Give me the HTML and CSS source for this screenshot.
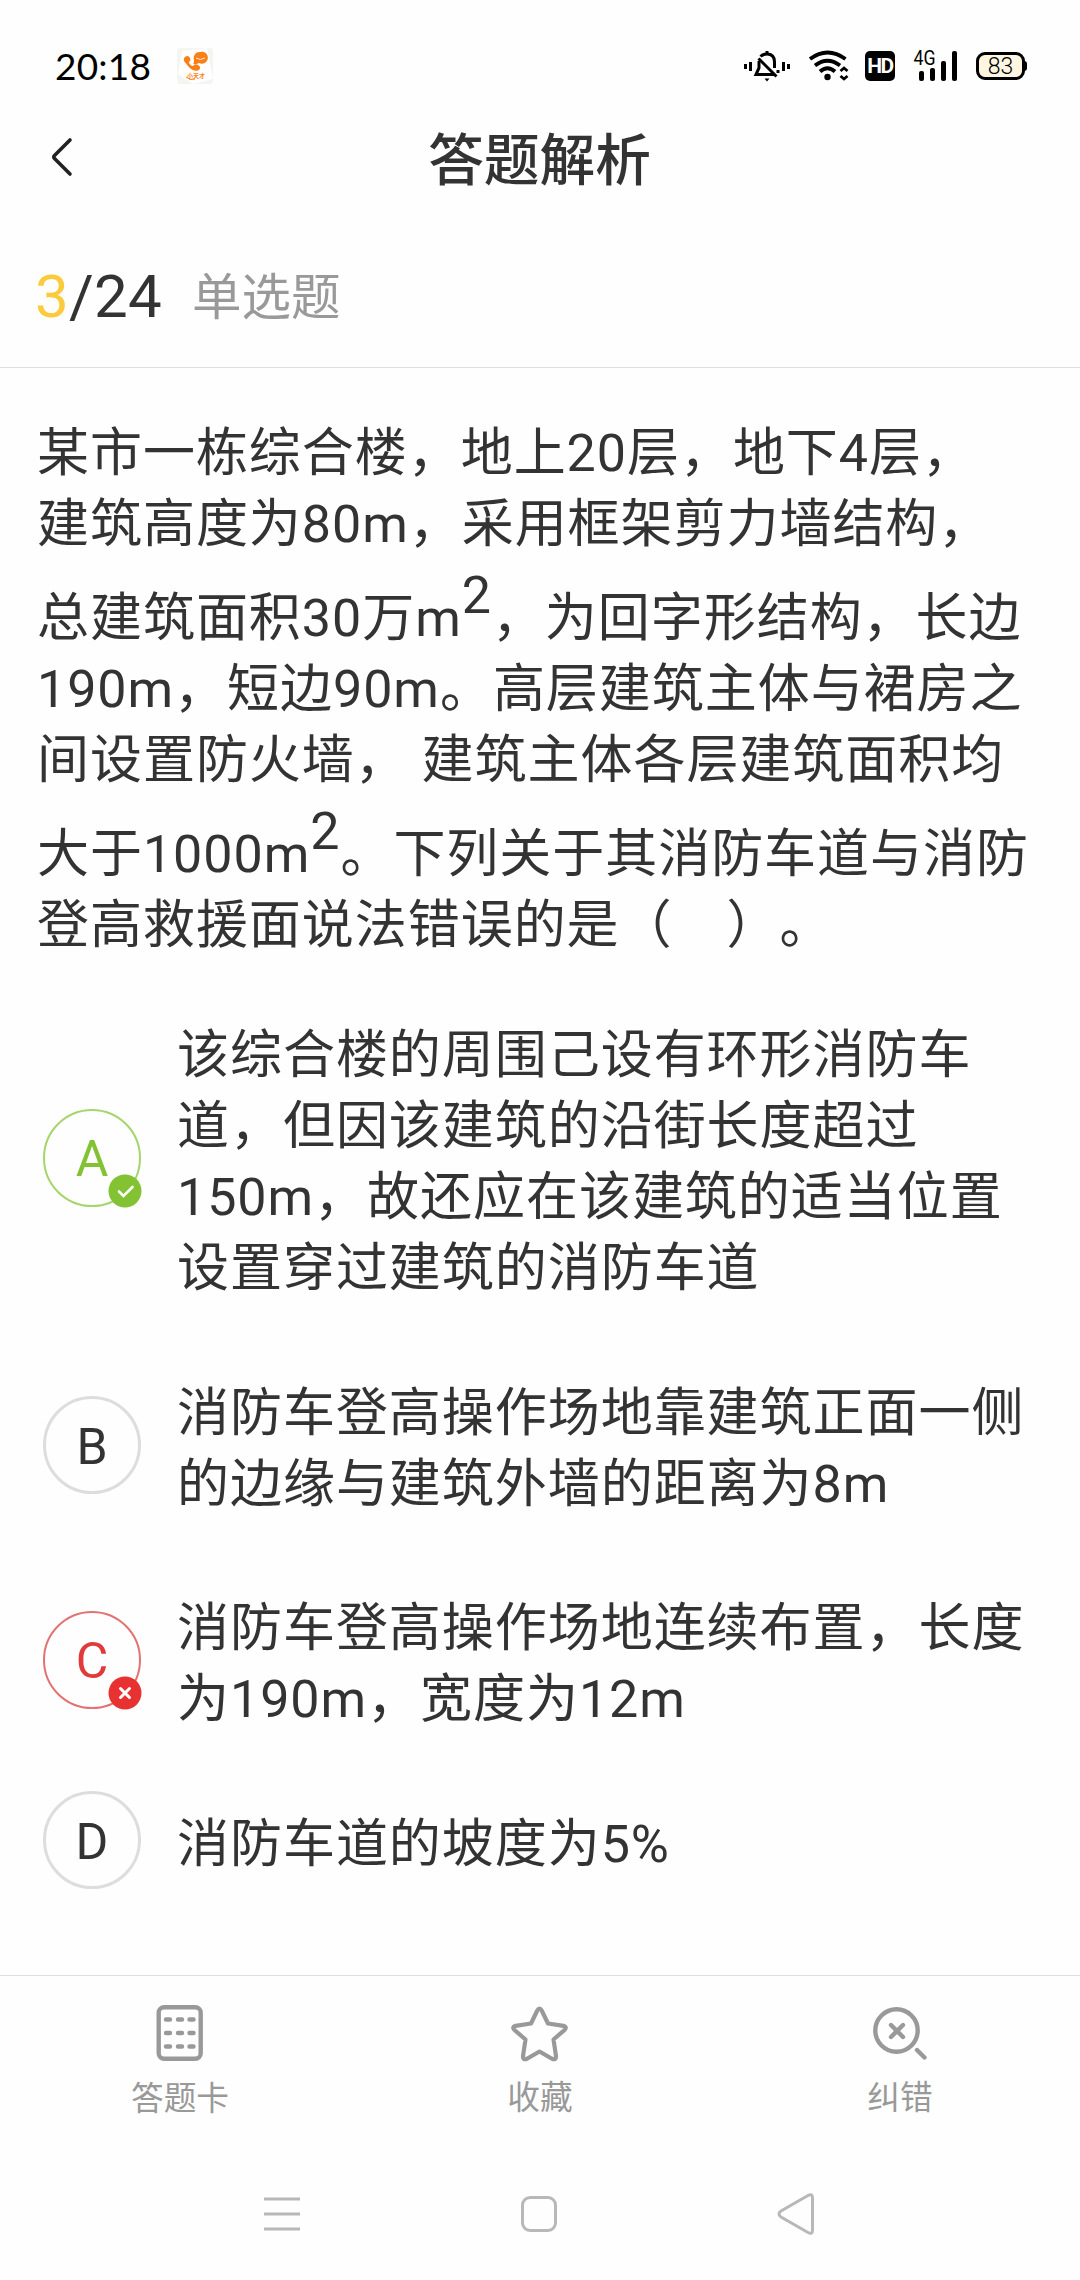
FILE: index.html
```html
<!DOCTYPE html>
<html lang="zh-CN">
  <head>
    <meta charset="UTF-8" />
    <meta name="viewport" content="width=device-width, initial-scale=1.0" />
    <title>答题解析</title>
    <link rel="stylesheet" href="styles.css">
  </head>
  <body>
    <div class="status-bar">
      <div class="time">20:18</div>
      <svg class="app-icon" width="36" height="36" viewBox="0 0 36 36">
        <rect width="36" height="36" rx="3" fill="#f4f5f0" />
        <path d="M5 3L30 0L36 31L16 36L1 26Z" fill="#fff" />
        <path d="M8 9c2-2 4-1 5 1s0 3-1 4c0 2 2 4 4 4c1-1 3-2 5-1s3 3 1 5c-3 2-8 0-11-4S5 12 8 9z" fill="#fa7f16" />
        <path d="M23 4a6 6 0 1 1-1 11c-2 1-4 2-6 1c1-1 1-2 1-4a6 6 0 0 1 6-8z" fill="#fa7f16" />
        <path d="M19 10q4 3 9 0" fill="none" stroke="#fff" stroke-width="0.8" />
        <path d="M9 29q4 4 9 2" fill="none" stroke="#fa7f16" />
        <text x="10" y="30" font-size="6" font-weight="700" fill="#fa7f16">小天才</text>
      </svg>
      <div class="status-icons">
        <!-- muted -->
        <svg width="46" height="32" viewBox="0 0 46 32" fill="none" stroke="#000" stroke-width="3">
          <path d="M1.5 14v5M6.500 12v9M39.500 12v9M44.500 14v5" />
          <path d="M16.500 6.500C18.500 4.500 20 4 23 4c5 0 7.500 3 7.500 8v6M15 11v7l-3 6.500h18" />
          <path d="M14.500 8.500l18 18M34 20v3M23 1v3" />
          <path d="M20.500 28.500h5l-2.500 3z" fill="#000" stroke="none" />
        </svg>
        <!-- wifi -->
        <svg class="wifi" width="40" height="32" viewBox="0 0 40 32" fill="none" stroke="#000" stroke-width="3.900">
          <path d="M1 9Q18.500-4 36.500 9M6 15.500Q18.500 6 31 15.500M11 21.500Q18.500 15 26 21.500" />
          <circle cx="18.500" cy="27" r="3.200" fill="#000" stroke="none" />
          <path d="M31.500 21l3.500-3 3.500 3M31.500 26l3.500 3 3.500-3" stroke-width="2.800" />
        </svg>
        <div class="hd">HD</div>
        <svg class="signal" width="46" height="32" viewBox="0 0 46 32">
          <text x="0.500" y="15" class="net" textLength="22" lengthAdjust="spacingAndGlyphs">4G</text>
          <rect x="6" y="21" width="5" height="10" rx="2" />
          <rect x="17" y="18" width="5" height="13" rx="2" />
          <rect x="28" y="11" width="5" height="20" rx="2" />
          <rect x="39" y="1" width="5" height="30" rx="2" />
        </svg>
        <div class="battery">83</div>
      </div>
    </div>

    <div class="header">
      <svg class="back" width="22" height="40" viewBox="0 0 22 40">
        <path d="M20 2L4.500 17.500Q3 19 4.500 20.500L20 36" fill="none" stroke="#222" stroke-width="3.600" stroke-linecap="round" />
      </svg>
      <h1>答题解析</h1>
    </div>

    <div class="progress">
      <div class="count"><span>3</span>/24</div>
      <div class="type">单选题</div>
    </div>

    <div class="content">
      <p class="question">
        某市一栋综合楼，地上20层，地下4层，<br />
        建筑高度为80m，采用框架剪力墙结构，<br />
        总建筑面积30万m<sup>2</sup>，为回字形结构，长边<br />
        190m，短边90m。高层建筑主体与裙房之<br />
        间设置防火墙， 建筑主体各层建筑面积均<br />
        大于1000m<sup>2</sup>。下列关于其消防车道与消防<br />
        登高救援面说法错误的是（<span class="blank"></span>）。
      </p>

      <div class="options">
        <div class="option correct">
          <div class="letter">A
            <svg class="badge" width="34" height="34" viewBox="0 0 34 34">
              <circle cx="17" cy="17" r="16.500" fill="#83c233" />
              <path d="M11 17.500l4.500 4.500 9-9" fill="none" stroke="#fff" stroke-width="2.600" stroke-linecap="round" />
            </svg>
          </div>
          <div class="text">该综合楼的周围己设有环形消防车<br />道，但因该建筑的沿街长度超过<br />150m，故还应在该建筑的适当位置<br />设置穿过建筑的消防车道</div>
        </div>
        <div class="option">
          <div class="letter">B</div>
          <div class="text">消防车登高操作场地靠建筑正面一侧<br />的边缘与建筑外墙的距离为8m</div>
        </div>
        <div class="option wrong">
          <div class="letter">C
            <svg class="badge" width="34" height="34" viewBox="0 0 34 34">
              <circle cx="17" cy="17" r="16.500" fill="#e83232" />
              <path d="M12.500 12.500l9 9M21.500 12.500l-9 9" fill="none" stroke="#fff" stroke-width="3" stroke-linecap="round" />
            </svg>
          </div>
          <div class="text">消防车登高操作场地连续布置，长度<br />为190m，宽度为12m</div>
        </div>
        <div class="option">
          <div class="letter">D</div>
          <div class="text">消防车道的坡度为5%</div>
        </div>
      </div>
    </div>

    <div class="toolbar">
      <div class="tool">
        <svg width="60" height="60" viewBox="0 0 60 60" fill="none" stroke="#999" stroke-width="4.400">
          <rect x="8.700" y="4.200" width="42" height="51.600" rx="5.500" />
          <path d="M16 16.500h4M28 16.500h4M39.500 16.500h4M16 30h4M28 30h4M39.500 30h4M16 43.500h4M28 43.500h4M39.500 43.500h4" stroke-linecap="round" />
        </svg>
        <span>答题卡</span>
      </div>
      <div class="tool">
        <svg width="60" height="60" viewBox="0 0 60 60" fill="none" stroke="#999" stroke-width="4.200" stroke-linejoin="round">
          <path d="M27.300 7.500Q29.500 3.500 31.700 7.500L38 20.500L53.500 22.800Q57.500 24 54.500 27L43.500 36.500L46 53Q46.200 57.500 42 55.800L29.500 48.500L17 55.800Q12.800 57.500 13 53L15.500 36.500L4.500 27Q1.500 24 5.500 22.800L21 20.500Z" />
        </svg>
        <span>收藏</span>
      </div>
      <div class="tool">
        <svg width="60" height="60" viewBox="0 0 60 60" fill="none" stroke="#999" stroke-width="4.400" stroke-linecap="round">
          <circle cx="26.500" cy="27.500" r="21.200" />
          <path d="M21 22l12 12M33 22l-12 12M47 47l7.500 7.500" />
        </svg>
        <span>纠错</span>
      </div>
    </div>

    <div class="nav-bar">
      <svg width="36" height="42" viewBox="0 0 36 42" stroke="#b8b8b8" stroke-width="3">
        <path d="M0 6h36M0 21h36M0 36h36" />
      </svg>
      <svg width="36" height="42" viewBox="0 0 36 42" fill="none" stroke="#b8b8b8" stroke-width="3">
        <rect x="1.500" y="4.500" width="33" height="33" rx="7.500" />
      </svg>
      <svg width="38" height="42" viewBox="0 0 38 42" fill="none" stroke="#b8b8b8" stroke-width="3">
        <path d="M31 2.500Q35.500 0 35.500 5V37Q35.500 42 31 39.500L4 24Q0 21 4 18Z" />
      </svg>
    </div>
  </body>
</html>
```
FILE: styles.css
```css
* {
  box-sizing: border-box;
}
body {
  display: flex;
  flex-direction: column;
  width: 1080px;
  height: 2280px;
  margin: 0;
  background-color: #fefefe;
  color: #333;
  font-family: Roboto, "Noto Sans CJK SC", sans-serif;
  text-spacing-trim: space-all;
}
svg {
  display: block;
  flex: none;
  overflow: visible;
}

.status-bar {
  display: flex;
  align-items: center;
  height: 96px;
  padding: 36px 55px 0 55px;
  color: #000;
}
.time {
  width: 122px;
  font: 37px/60px Lato, sans-serif;
  letter-spacing: 0.2px;
}
.status-icons {
  display: flex;
  align-items: center;
  margin-left: auto;
}
.status-icons svg {
  margin-right: 19px;
}
.status-icons .wifi {
  margin-right: 16px;
}
.status-icons .signal {
  margin-right: 17px;
}
.hd {
  width: 30px;
  height: 30px;
  margin-right: 18px;
  border-radius: 5px;
  background: #000;
  color: #fff;
  font-size: 21px;
  font-weight: 700;
  line-height: 31px;
  text-align: center;
  letter-spacing: -1.500px;
}
.net {
  font-size: 20px;
}
.battery {
  position: relative;
  width: 49px;
  height: 28px;
  border: 3px solid #000;
  border-radius: 9px;
  background: #fef6e0;
  font-size: 23px;
  font-weight: 300;
  line-height: 23px;
  text-align: center;
}
.battery::after {
  content: "";
  position: absolute;
  right: -5px;
  top: 6px;
  width: 3px;
  height: 10px;
  border-radius: 0 3px 3px 0;
  background: #000;
}

.header {
  display: flex;
  align-items: center;
  height: 130px;
  padding-left: 50px;
}
.header h1 {
  flex: 1;
  margin: -12px 73px 0 0;
  font-size: 55.700px;
  font-weight: 500;
  text-align: center;
}
.back {
  margin-top: -6px;
}

.progress {
  display: flex;
  align-items: center;
  height: 142px;
  padding: 0 35px;
  border-bottom: 1px solid #ddd;
}
.count {
  width: 157px;
  font-size: 60px;
  letter-spacing: 0.3px;
}
.count span {
  color: #fccb3c;
}
.type {
  margin-top: -6px;
  color: #999;
  font-size: 49.500px;
}

.content {
  flex: 1;
  padding: 50px 0 0 37px;
  font-size: 52px;
  line-height: 71px;
  letter-spacing: 0.960px;
  white-space: nowrap;
}
.question {
  margin: 0 0 22px;
}
.question sup {
  font-size: 52px;
  vertical-align: 23px;
}
.blank {
  display: inline-block;
  width: 54px;
}

.option {
  display: flex;
  align-items: center;
  padding: 37px 0 36.500px 6px;
}
.letter {
  position: relative;
  width: 98px;
  height: 98px;
  margin: -18px 36px -14px 0;
  border: 3px solid #ddd;
  border-radius: 50%;
  font-size: 50px;
  line-height: 97px;
  letter-spacing: 0;
  text-align: center;
  transform: translateY(-2px);
}
.badge {
  position: absolute;
  right: -3px;
  bottom: -3px;
}
.correct .letter {
  border: 2px solid #a5d56c;
  color: #83c233;
}
.wrong .letter {
  border: 2px solid #e37373;
  color: #e03a3a;
}

.toolbar {
  display: flex;
  height: 187px;
  padding-top: 27px;
  border-top: 1px solid #ddd;
  color: #999;
  font-size: 32.700px;
}
.tool {
  flex: 1;
  display: flex;
  flex-direction: column;
  align-items: center;
}
.tool span {
  margin-top: 10px;
  line-height: 50px;
}
.tool:first-child span {
  margin-top: 11px;
}

.nav-bar {
  display: flex;
  justify-content: space-between;
  align-items: center;
  height: 118px;
  padding: 0 265px 14px 264px;
}
```
